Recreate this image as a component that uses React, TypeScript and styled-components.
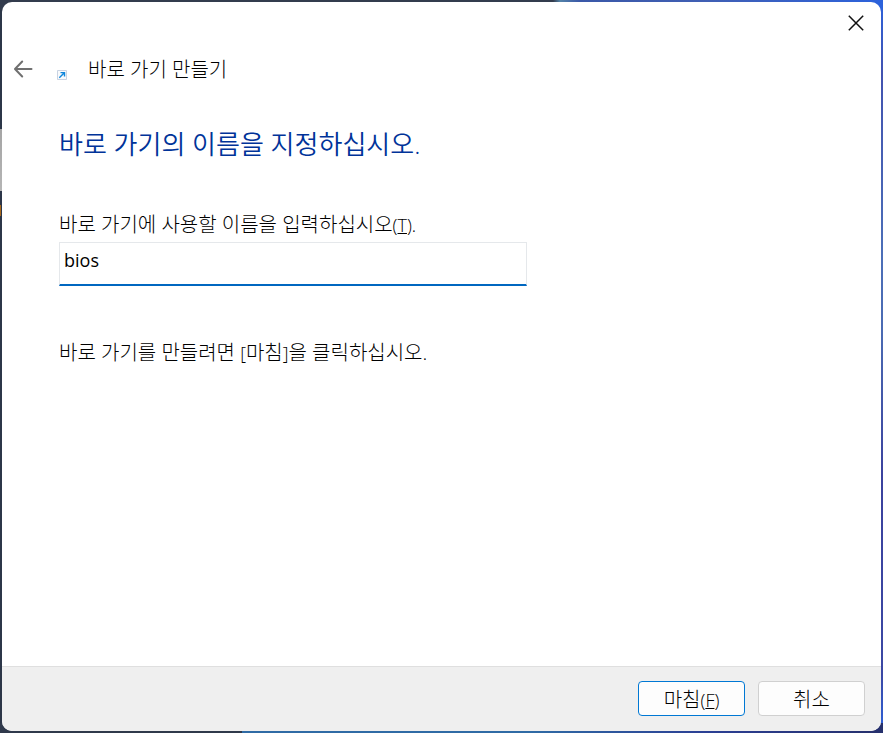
import React, { useState } from "react";
import styled, { createGlobalStyle } from "styled-components";

const GlobalStyle = createGlobalStyle`
  *, *::before, *::after { box-sizing: border-box; }
  body {
    margin: 0;
    font-family: "Open Sans", "Noto Sans CJK KR", sans-serif;
    font-size: 18px;
    font-weight: 300;
    color: #000;
  }
  button, input { font: inherit; color: inherit; }
`;

const Desktop = styled.div`
  min-height: 100vh;
  padding: 2px;
  display: flex;
  background:
    linear-gradient(90deg, #2f394b 0 242px, #2f6ba5 242px 60%, #2b3f94 80%, #26306c) bottom / 100% 10px no-repeat,
    linear-gradient(90deg, #333c4d 0 553px, #5382a8 560px, #3a58a8 580px, #405fb4 80%, #2c62dc) top / 100% 10px no-repeat,
    linear-gradient(#a5a5a5, #b5b5b5) 0 129px / 2px 62px no-repeat,
    linear-gradient(#a8691c, #a8691c) 0 205px / 1px 11px no-repeat,
    linear-gradient(#2c3648, #2c3648) left / 50% 100% no-repeat,
    linear-gradient(#2c62dc, #4253b0 10%, #4c6fb8 35%, #4b6bb3 45%, #3b429e 65%, #3b48a4 92%, #2c62dc) right / 50% 100% no-repeat;
`;

const Dialog = styled.main`
  flex: 1;
  display: flex;
  flex-direction: column;
  overflow: hidden;
  border-radius: 10px;
  background: #fff;
`;

const TitleBar = styled.div`
  display: flex;
  justify-content: flex-end;
  height: 42px;
`;

const IconButton = styled.button`
  display: flex;
  align-items: center;
  justify-content: center;
  padding: 0;
  border: 0;
  background: transparent;
`;

const CloseButton = styled(IconButton)`
  width: 50px;
  height: 42px;
`;

const Header = styled.header`
  display: flex;
  align-items: center;
  height: 50px;
  padding-left: 9px;
`;

const BackButton = styled(IconButton)`
  width: 24px;
  height: 32px;
`;

const ShortcutIcon = styled.svg`
  width: 10px;
  height: 10px;
  margin: 12px 21px 0 22px;
`;

const Title = styled.span`
  padding-top: 2px;
  font-size: 20px;
  line-height: 28px;
`;

const Content = styled.form`
  flex: 1;
  display: flex;
  flex-direction: column;
  align-items: flex-start;
  padding: 30px 57px;
`;

const Heading = styled.h1`
  margin: 0 0 47px;
  color: #003399;
  font-size: 26px;
  font-weight: 350;
  line-height: 40px;
`;

const Label = styled.label`
  margin-bottom: 3px;
  font-size: 20px;
  line-height: 28px;
`;

const Latin = styled.span`
  font-size: 18px;
`;

const NameInput = styled.input`
  width: 468px;
  max-width: 100%;
  height: 44px;
  padding: 0 4px 8px;
  border: 1px solid #e5e8eb;
  border-bottom: 2px solid #0067c0;
  border-radius: 0;
  outline: none;
  background: #fff;
  font-weight: 400;
`;

const Hint = styled.p`
  margin: 53px 0 0;
  font-size: 20px;
  line-height: 28px;
`;

const Footer = styled.footer`
  display: flex;
  justify-content: flex-end;
  gap: 13px;
  padding: 14px 16px 15px;
  border-top: 1px solid #dfdfdf;
  background: #efefef;
`;

const ActionButton = styled.button<{ $primary?: boolean }>`
  width: 107px;
  height: 35px;
  padding: 2px 0 0;
  border: 1px solid ${({ $primary }) => ($primary ? "#0078d4" : "#d0d0d0")};
  border-radius: 4px;
  background: #fdfdfd;
  font-size: 20px;
  line-height: 28px;
`;

export default function App() {
  const [name, setName] = useState("bios");

  return (
    <>
      <GlobalStyle />
      <Desktop>
        <Dialog>
          <TitleBar>
            <CloseButton type="button" aria-label="닫기">
              <svg width="16" height="16" viewBox="0 0 16 16" fill="none" stroke="#111" strokeWidth="1.5">
                <path d="M.8.8l14.4 14.4M15.2.8L.8 15.2" />
              </svg>
            </CloseButton>
          </TitleBar>
          <Header>
            <BackButton type="button" aria-label="뒤로">
              <svg width="20" height="18" viewBox="0 0 20 18" fill="none" stroke="#707070" strokeWidth="2" strokeLinecap="round" strokeLinejoin="round">
                <path d="M9.2 1.5L2 9l7.2 7.5M2.2 9H18.5" />
              </svg>
            </BackButton>
            <ShortcutIcon viewBox="0 0 10 10" fill="none" aria-hidden="true">
              <path d="M.5.5h9v9h-9z" fill="#f8fafc" stroke="#c9d3e2" />
              <path d="M2.3 7.7l4.5-4.5M3.5 2.6h4v4" stroke="#0f86dc" strokeWidth="1.4" />
            </ShortcutIcon>
            <Title>바로 가기 만들기</Title>
          </Header>
          <Content id="shortcut" onSubmit={(event) => event.preventDefault()}>
            <Heading>바로 가기의 이름을 지정하십시오.</Heading>
            <Label htmlFor="name">
              바로 가기에 사용할 이름을 입력하십시오<Latin>(<u>T</u>).</Latin>
            </Label>
            <NameInput id="name" value={name} onChange={(event) => setName(event.target.value)} />
            <Hint>
              바로 가기를 만들려면 <Latin>[</Latin>마침<Latin>]</Latin>을 클릭하십시오.
            </Hint>
          </Content>
          <Footer>
            <ActionButton type="submit" form="shortcut" $primary>
              마침<Latin>(<u>F</u>)</Latin>
            </ActionButton>
            <ActionButton type="button">취소</ActionButton>
          </Footer>
        </Dialog>
      </Desktop>
    </>
  );
}
